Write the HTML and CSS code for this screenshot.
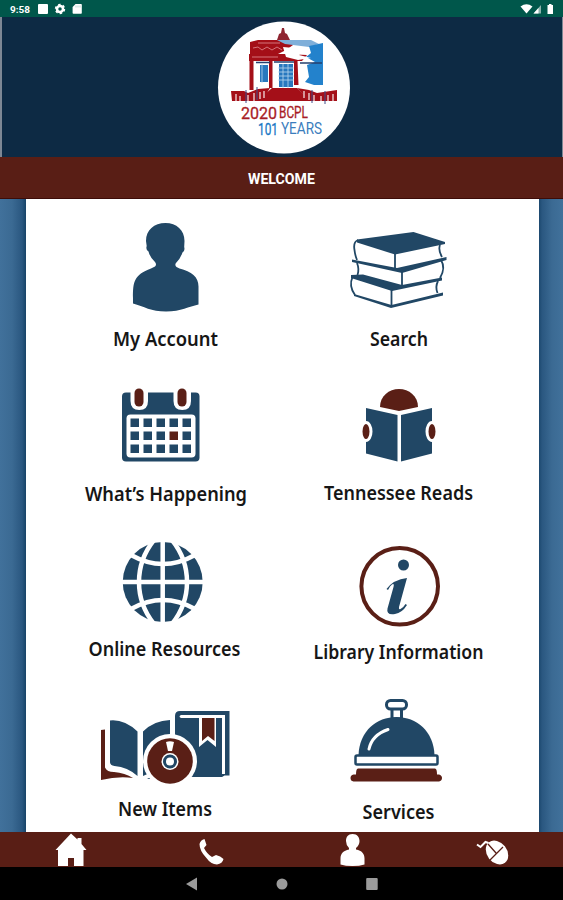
FILE: index.html
```html
<!DOCTYPE html>
<html lang="en">
<head>
    <meta charset="UTF-8">
    <meta name="viewport" content="width=device-width, initial-scale=1.0">
    <title>BCPL</title>
    <link rel="stylesheet" href="styles.css">
</head>
<body>
    <div class="status-bar">
        <svg class="status-left" width="90" height="17" viewBox="0 0 90 17">
            <text x="10" y="12.500" class="clock" textLength="20" lengthAdjust="spacingAndGlyphs">9:58</text>
            <rect x="38" y="4" width="10" height="10" rx="1"/>
            <circle cx="60" cy="9" r="3" class="gear"/>
            <circle cx="60" cy="9" r="4.400" class="teeth"/>
            <path d="M75.500 4H81q.8 0 .8.800V13q0 .8-.8.800H73.400q-.8 0-.8-.800V7z"/>
            <path d="M76 5.500v2M78 5.500v2M80 5.500v2" class="slots"/>
        </svg>
        <svg class="status-right" width="43" height="17" viewBox="520 0 43 17">
            <path d="M520.500 6.500q6-4.500 12 0l-6 7z"/>
            <path d="M533.500 13.500h7.500V5z" opacity=".55"/>
            <path d="M533.500 13.500h5V8z"/>
            <path d="M547.500 5h1.500V4h2.500v1h1.500v9h-5.500z"/>
        </svg>
    </div>

    <header class="header">
        <svg class="logo" width="134" height="134" viewBox="217 20 134 134">
            <circle cx="284" cy="87.500" r="66" fill="#fff"/>
            <!-- roof -->
            <path d="M277 40l2-6 2-1 1-5h2l1 5 2 1 3 6z" fill="#8f2430"/>
            <path d="M250 42l8-2h42l-14 10-8 4 6 3-6 4h-28z" fill="#a40f18"/>
            <path d="M277 40h34l8 4-10 3-24-3z" fill="#7fafd9"/>
            <path d="M309 46l14-3v42h-9l-9-3 4-5-2-12 8-3-9-5 5-4z" fill="#2382cc"/>
            <path d="M249 54h36l22 1-5 6h-53z" fill="#a40f18"/>
            <path d="M253 48l5-1 4 3 5-3 5 3 5-3 5 3M252 57h26M258 43h22" class="roof-lines"/>
            <path d="M283 47l22 2-6 6 12 3-13 2-12-3z" fill="#fff"/>
            <!-- columns -->
            <path d="M249.500 61h4v29h-4zM269 61h3.500v27H269zM294 61h3.500l1 24h-4.500z" fill="#a40f18"/>
            <path d="M260 65h8v17h-8zM279 64h14v23h-14z" fill="#2878be"/>
            <path d="M262 64v19M283 64v24M288 64v24M278 68h16M278 72h16M278 76h16M278 80h16" class="door-lines"/>
            <path d="M256 62.500h14M274 62h20M300 63h22" stroke="#25406f" stroke-width="1.300"/>
            <!-- steps and fence -->
            <path d="M272 88h25l13 13h-53z" fill="#a40f18"/>
            <path d="M231 91h13l4 2 10-4 12-1-8 13h-30z" fill="#a40f18"/>
            <path d="M297 88l12 2 8 3 20-3v11h-28z" fill="#a40f18"/>
            <path d="M236 94v8M240 96v8M248 95v8M254 93v8M260 92v7M264 91v7M304 91v7M309 93v7M314 95v7M321 96v8M328 95v7M333 94v8" class="fence"/>
            <path d="M246 90v13M257 87v13M312 90v13M325 91v13" stroke="#3d4c8a" stroke-width="1"/>
            <text x="241" y="118.500" class="logo-red" textLength="36" lengthAdjust="spacingAndGlyphs">2020</text>
            <text x="279" y="117.500" class="logo-red" textLength="29" lengthAdjust="spacingAndGlyphs">BCPL</text>
            <text x="258" y="134.500" class="logo-blue" textLength="20" lengthAdjust="spacingAndGlyphs">101</text>
            <text x="281" y="133.500" class="logo-years" textLength="41" lengthAdjust="spacingAndGlyphs">YEARS</text>
        </svg>
    </header>

    <div class="title-bar">
        <svg width="70" height="20" viewBox="0 0 70 20">
            <text x="1" y="15.500" textLength="67" lengthAdjust="spacingAndGlyphs">WELCOME</text>
        </svg>
    </div>

    <main class="content">
        <div class="grid">
            <a class="tile">
                <svg viewBox="26 199 256 161">
                    <path class="blue" d="M165.500 223c11 0 19 7 19 18l-.3 6q1 4-1.700 5.500-2 6-6.500 10.500-1.500 2 .5 4l3 1.500c12 3 19 8 19 18v18c-10 2-17 7-32.500 7-15 0-22-5-33-8 0-20-1-28 18-35l4-2q2-2 0-4.500-5-4.500-6.500-10.500-3-1.500-1.800-5.500l-.7-5c0-11 8-18 19.500-18z"/>
                    <text class="label" x="113" y="346" textLength="105" lengthAdjust="spacingAndGlyphs">My Account</text>
                </svg>
            </a>
            <a class="tile">
                <svg viewBox="282 199 256 161">
                    <path class="blue" d="M357 239.500l56.500-7.500 31.500 10v2l-50 10.500-38-12z"/>
                    <path class="blue" d="M352 259.500l45 8.500 49.500-11v3L402 273l-50-11z"/>
                    <path class="blue" d="M351 275l12-.5 39 10.500 40-7.500v3L392 291l-41-13z"/>
                    <path class="blue" d="M354 294l37.500 11L443 292.500v3L391 308l-37-12z"/>
                    <g class="book-lines">
                        <path d="M358 240q-5 2-3.500 10 .5 5 2.500 10M395 253v15M440 245q-2 5 2 12"/>
                        <path d="M441 260q5 8-1 18M402 271v14M357 263q2.500 6 .5 12"/>
                        <path d="M352.500 277q-4 9 2.500 18M391.500 289v17M438 281q-3 6-.5 12"/>
                    </g>
                    <text class="label" x="370" y="346" textLength="58" lengthAdjust="spacingAndGlyphs">Search</text>
                </svg>
            </a>
            <a class="tile">
                <svg viewBox="26 360 256 155">
                    <rect class="blue" x="122" y="392.500" width="77.500" height="69" rx="4"/>
                    <path d="M130.500 390h17.500v11q0 9-8.700 9t-8.800-9zM173.500 390h17.500v11q0 9-8.700 9t-8.800-9z" fill="#fff"/>
                    <rect class="red" x="134.500" y="388.500" width="9" height="18" rx="4.500"/>
                    <rect class="red" x="177.500" y="388.500" width="9" height="18" rx="4.500"/>
                    <rect x="126.500" y="414.500" width="69" height="43" rx="4" fill="#fff"/>
                    <path class="blue" d="M130.500 418.500h8.500v8.500h-8.500zm13 0h8.500v8.500h-8.500zm13 0h8.500v8.500h-8.500zm13 0h8.500v8.500h-8.500zm13 0h8.500v8.500h-8.500zM130.500 431.500h8.500v8.500h-8.500zm13 0h8.500v8.500h-8.500zm13 0h8.500v8.500h-8.500zm26 0h8.500v8.500h-8.500zM130.500 444.500h8.500v8.500h-8.500zm13 0h8.500v8.500h-8.500zm13 0h8.500v8.500h-8.500zm13 0h8.500v8.500h-8.500zm13 0h8.500v8.500h-8.500z"/>
                    <rect class="red" x="169.500" y="431.500" width="8.500" height="8.500"/>
                    <text class="label" x="85" y="501" textLength="162" lengthAdjust="spacingAndGlyphs">What’s Happening</text>
                </svg>
            </a>
            <a class="tile">
                <svg viewBox="282 360 256 155">
                    <path class="red" d="M380 407c0-11 9-18 19-18s19 7 19 18l-19 4z"/>
                    <path class="blue" d="M366 408l31.500 7v46.500l-31.500-8zM432 408l-31 7v46.500l31-8z"/>
                    <ellipse class="hand" cx="366" cy="431.500" rx="5" ry="9"/>
                    <ellipse class="hand" cx="432" cy="431.500" rx="5" ry="9"/>
                    <text class="label" x="324" y="500" textLength="149" lengthAdjust="spacingAndGlyphs">Tennessee Reads</text>
                </svg>
            </a>
            <a class="tile">
                <svg viewBox="26 515 256 155">
                    <circle class="blue" cx="162.700" cy="582" r="40"/>
                    <g class="globe-lines">
                        <path d="M162.700 540v84M121 582h83"/>
                        <path d="M154 540c-20 25-20 59 0 84M172 540c20 25 20 59 0 84"/>
                        <path d="M131 555q32 18 64 0M131 609q32-18 64 0"/>
                    </g>
                    <text class="label" x="88.500" y="656" textLength="152" lengthAdjust="spacingAndGlyphs">Online Resources</text>
                </svg>
            </a>
            <a class="tile">
                <svg viewBox="282 515 256 155">
                    <circle cx="399.700" cy="586.300" r="38.300" fill="none" stroke="#5a1f16" stroke-width="4"/>
                    <circle class="blue" cx="403.500" cy="565" r="5.500"/>
                    <path class="blue" d="M386.500 589q7-9.500 20.500-11l-8 29q-.5 3 1.500 2 3-1.500 5-5l1.500 1q-5 8-12 9-9 1.500-7.500-5.500l6-21.500q1-4-1.500-2.500-2 1-4 5.500z"/>
                    <text class="label" x="313.500" y="659" textLength="170" lengthAdjust="spacingAndGlyphs">Library Information</text>
                </svg>
            </a>
            <a class="tile">
                <svg viewBox="26 670 256 162">
                    <path class="red" d="M101 730l4-.5v38q2 4.500 9 4.500 11 1 19 6-15-2-32 2z"/>
                    <path class="blue" d="M110 720.500q14-1.500 27.500 11V776q-10-9-23-10-4.500-.5-4.500-4zM143 731.500q11-11 27-11.500v37l-18 15-9 4z"/>
                    <path d="M147 779l4-2v2z" fill="#214765"/>
                    <path class="blue" d="M180 711h49.500v64.500h-5L222 777h-47v-61q0-5 5-5z"/>
                    <path d="M181 715h44v59h-3v-56h-41q-3-1.500 0-3z" fill="#fff"/>
                    <path d="M199 718h17v29l-8.500-7-8.500 7z" fill="#fff"/>
                    <path class="red" d="M202 718h12.500v23l-6.500-5-6 5z"/>
                    <circle cx="170" cy="761" r="27" fill="#fff"/>
                    <circle class="red" cx="170" cy="761" r="22.800"/>
                    <path d="M166 742q4-1.500 8 0l-2 9h-4z" fill="#fff"/>
                    <circle cx="170" cy="761.500" r="8.500" fill="#fff"/>
                    <circle cx="170" cy="761.500" r="5.500" fill="none" stroke="#214765" stroke-width="3"/>
                    <text class="label" x="118" y="816" textLength="94" lengthAdjust="spacingAndGlyphs">New Items</text>
                </svg>
            </a>
            <a class="tile">
                <svg viewBox="282 670 256 162">
                    <g class="bell-lines">
                        <path d="M392 709v10h9.500v-10"/>
                        <rect x="386.500" y="700.500" width="20" height="8.500" rx="4"/>
                    </g>
                    <path class="blue" d="M358.500 755c1-24 18-38 38-38s37 14 38 38z"/>
                    <path d="M369 749q3-14 19-19.500" class="shine"/>
                    <rect x="355.500" y="755.500" width="82" height="9" rx="1.500" fill="#fff" stroke="#214765" stroke-width="2.500"/>
                    <path class="red" d="M358 768.500h77q2 0 2 6h2q3 1 3 3.500t-3 3.500h-85.500q-3-.5-3-3.500t3-3.500h2.500q0-6 2-6z"/>
                    <text class="label" x="362.500" y="819" textLength="72" lengthAdjust="spacingAndGlyphs">Services</text>
                </svg>
            </a>
        </div>
    </main>

    <nav class="bottom-nav">
        <a><svg viewBox="0 832 141 35">
            <path d="M71 833.500l6.500 6V838h4v6l5 6h-3v16H74v-8h-6v8H58v-16h-2.500z"/>
        </svg></a>
        <a><svg viewBox="141 832 141 35">
            <path d="M204.500 839l2 6-2.500 3q3 6 8 9l4-2q4.500 1 7.500 4-1 4.500-6.500 5.500-6 0-11-7-6.500-7-6.500-13.500 1-4 5-5z"/>
        </svg></a>
        <a><svg viewBox="282 832 141 35">
            <path d="M352.500 834c5 0 7 3.500 7 7q0 4-3.500 7v1.500c6 1 8.500 4.500 8.500 9v6q-5 1.500-12 1.500t-12-1.500v-6c0-5 3-8 8.500-9V848q-3-3-3-7c0-4 2-7 6.500-7z"/>
        </svg></a>
        <a><svg viewBox="423 832 140 35">
            <ellipse cx="497" cy="852.500" rx="10" ry="13" transform="rotate(-38 497 852.500)"/>
            <path class="wire" d="M477 844.500l3.500 2.500 5-5 3 1"/>
            <path class="mouse-cut" d="M488 844l8 9M490 860l13-13"/>
        </svg></a>
    </nav>

    <div class="system-nav">
        <svg width="14" height="14" viewBox="0 0 14 14"><path d="M1 7l11-6.500v13z"/></svg>
        <svg width="14" height="14" viewBox="0 0 14 14"><circle cx="7" cy="7" r="5.500"/></svg>
        <svg width="14" height="14" viewBox="0 0 14 14"><rect x="1.200" y="1" width="11.500" height="12" rx="1"/></svg>
    </div>
</body>
</html>
```
FILE: styles.css
```css
* {
    box-sizing: border-box;
    margin: 0;
    padding: 0;
}

body {
    width: 100%;
    height: 900px;
    display: flex;
    flex-direction: column;
    overflow: hidden;
    background-color: #000;
    font-family: "Noto Sans", sans-serif;
}

svg {
    display: block;
}

.status-bar {
    height: 17px;
    display: flex;
    justify-content: space-between;
    background-color: #00574b;
}

.status-bar svg {
    fill: #fff;
}

.clock {
    font: 700 9px Roboto, sans-serif;
}

.status-bar .gear {
    fill: none;
    stroke: #fff;
    stroke-width: 2.5;
}

.status-bar .teeth {
    fill: none;
    stroke: #fff;
    stroke-width: 1.6;
    stroke-dasharray: 2.4 2.2;
}

.slots {
    stroke: #9fc4bf;
    stroke-width: .7;
}

.header {
    height: 140px;
    display: flex;
    justify-content: center;
    padding: 3px 0 0 3px;
    background-color: #0d2a44;
    border-left: 2px solid #7d8794;
    border-right: 1px solid #7d8794;
}

.roof-lines {
    fill: none;
    stroke: #d4747a;
    stroke-width: 1;
}

.door-lines {
    stroke: #b9d7ee;
    stroke-width: .8;
}

.fence {
    stroke: #fff;
    stroke-width: 1.1;
}

.logo-red,
.logo-blue,
.logo-years {
    font: 400 17px Roboto, sans-serif;
    fill: #a81c25;
    stroke: #a81c25;
    stroke-width: .3;
}

.logo-blue {
    fill: #1777c4;
    stroke: #1777c4;
}

.logo-years {
    fill: #3b7dbd;
    stroke: none;
}

.title-bar {
    height: 42px;
    display: flex;
    justify-content: center;
    align-items: center;
    background-color: #591e15;
    border-bottom: 1px solid #3d0c08;
}

.title-bar text {
    font: 700 14.5px Roboto, sans-serif;
    fill: #fff;
}

.content {
    height: 633px;
    padding: 0 24.5px 0 26px;
    background: linear-gradient(to right, #41719b 0, #3b6a93 12px, #2a5780 22px, #174368 26px, #174368 538px, #2a5780 542px, #3b6a93 552px, #41719b 563px);
}

.grid {
    height: 100%;
    display: grid;
    grid-template-columns: 256px 256px;
    grid-template-rows: 161px 155px 155px 162px;
    background-color: #fff;
}

.tile svg {
    width: 100%;
    height: 100%;
}

.blue {
    fill: #214765;
}

.red {
    fill: #5a1f16;
}

.label {
    font-size: 20.5px;
    font-weight: 600;
    fill: #161616;
}

.book-lines {
    fill: none;
    stroke: #214765;
    stroke-width: 1.8;
}

.hand {
    fill: #5a1f16;
    stroke: #fff;
    stroke-width: 3;
}

.globe-lines {
    fill: none;
    stroke: #fff;
    stroke-width: 4.5;
}

.bell-lines {
    fill: #fff;
    stroke: #214765;
    stroke-width: 3;
}

.shine {
    fill: none;
    stroke: #fff;
    stroke-width: 3;
    stroke-linecap: round;
}

.bottom-nav {
    height: 35px;
    display: grid;
    grid-template-columns: 141px 141px 141px 140px;
    background-color: #591e15;
}

.bottom-nav svg {
    width: 100%;
    height: 35px;
    fill: #fff;
}

.bottom-nav .wire {
    fill: none;
    stroke: #fff;
    stroke-width: 2;
}

.bottom-nav .mouse-cut {
    fill: none;
    stroke: #591e15;
    stroke-width: 1.3;
}

.system-nav {
    height: 33px;
    display: flex;
    justify-content: center;
    align-items: center;
    gap: 76px;
    background-color: #000;
}

.system-nav svg {
    fill: #9b9b9b;
}
```
